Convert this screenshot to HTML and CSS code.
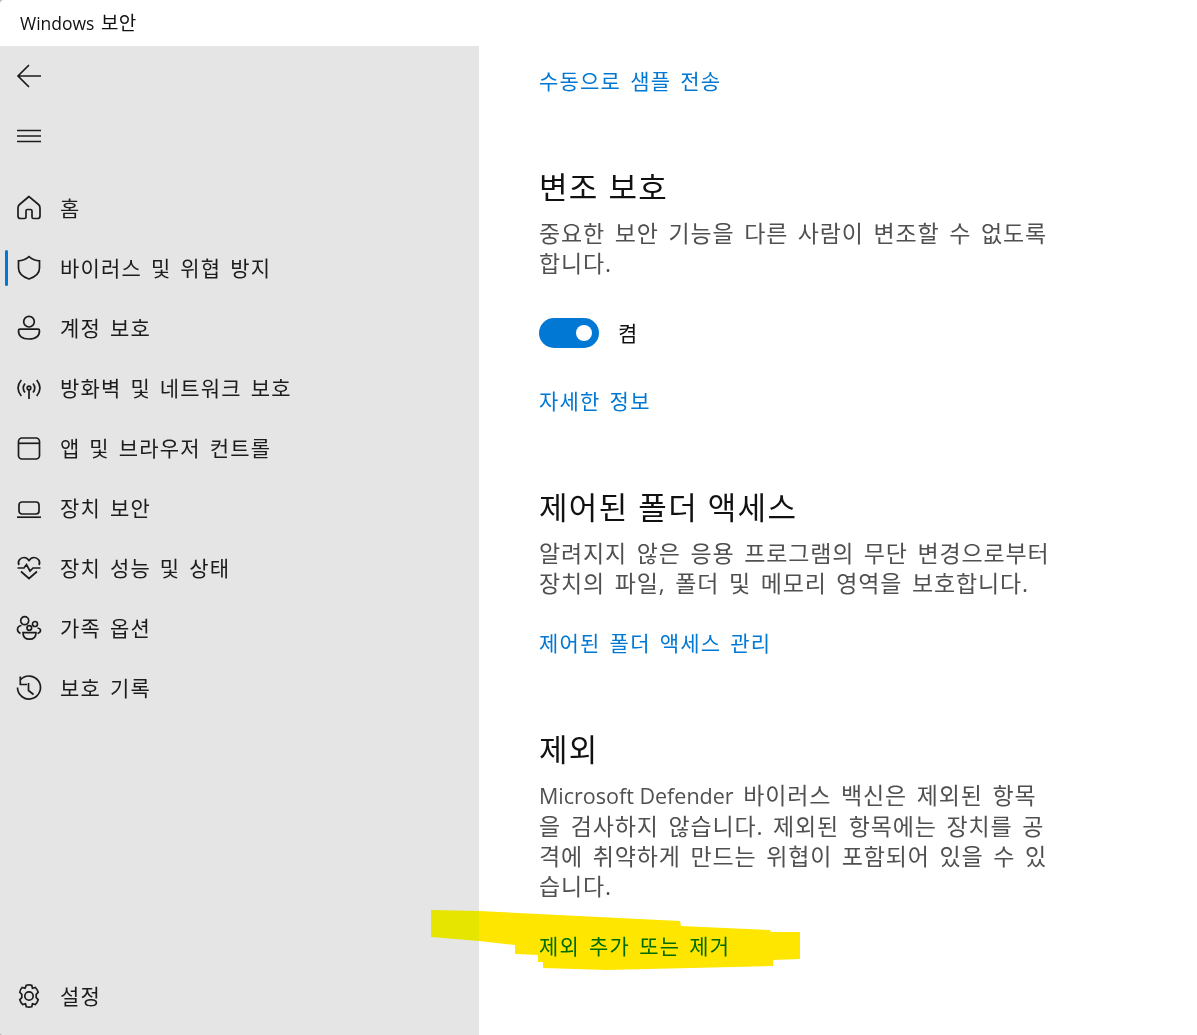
FILE: index.html
```html
<!DOCTYPE html>
<html lang="ko">
<head>
<meta charset="utf-8">
<title>Windows 보안</title>
<link rel="stylesheet" href="styles.css">
</head>
<body>
<div class="window">
  <header class="titlebar"><span class="title-latin">Windows</span> 보안</header>
  <div class="layout">
    <aside class="sidebar">
      <div class="tool">
        <svg class="icon" viewBox="0 0 24 24"><path d="M24 12H1M12 1 1 12l11 11"/></svg>
      </div>
      <div class="tool">
        <svg class="icon thin" viewBox="0 0 24 24"><path d="M0 6.500h24M0 12h24M0 17.500h24"/></svg>
      </div>
      <nav class="nav">
        <a class="item"><svg class="icon" viewBox="0 0 24 24"><path d="M12 .5 2.500 8.500Q1 9.800 1 12v8q0 2.500 2.500 2.500H7.500q1.500 0 1.500-1.500V15q0-1.500 1.500-1.500h3q1.500 0 1.500 1.500v6q0 1.500 1.500 1.500h4q2.500 0 2.500-2.500v-8q0-2.200-1.500-3.500z"/></svg><span>홈</span></a>
        <a class="item active"><svg class="icon" viewBox="0 0 24 24"><path d="M12 .7Q7 4.800 1.500 4.800V12q0 7.500 10.500 11Q22.500 19.500 22.500 12V4.800Q17 4.800 12 .7z"/></svg><span>바이러스 및 위협 방지</span></a>
        <a class="item"><svg class="icon" viewBox="0 0 24 24"><circle cx="12" cy="5.700" r="5.300"/><path d="M3 13.200h18q1.500 0 1.500 1.500 0 8.300-10.500 8.300T1.500 14.700q0-1.500 1.500-1.500z"/></svg><span>계정 보호</span></a>
        <a class="item"><svg class="icon" viewBox="0 0 24 24"><circle cx="12" cy="12" r="1.800"/><path d="M12 14v9M8 7.500q-3.500 4.500 0 9M16 7.500q3.500 4.500 0 9M4.300 4q-6.500 8 0 16M19.700 4q6.500 8 0 16"/></svg><span>방화벽 및 네트워크 보호</span></a>
        <a class="item"><svg class="icon" viewBox="0 0 24 24"><rect x="1.500" y="2" width="21" height="21" rx="3.500"/><path d="M1.500 7.300h21"/></svg><span>앱 및 브라우저 컨트롤</span></a>
        <a class="item"><svg class="icon" viewBox="0 0 24 24"><rect x="2" y="6" width="20" height="12" rx="3"/><path d="M0 21.200h24"/></svg><span>장치 보안</span></a>
        <a class="item"><svg class="icon" viewBox="0 0 24 24"><path d="M4 15.500 12 22.500 20 15.500M.5 12H7l2.500-3.500L13 15l3-3h7.500M2 9C0 5 3.500 1.500 7 1.500q3 0 5 3 2-3 5-3c3.500 0 7 3.500 5 7.500"/></svg><span>장치 성능 및 상태</span></a>
        <a class="item"><svg class="icon" viewBox="0 0 24 24"><circle cx="7.700" cy="4.700" r="4"/><circle cx="18" cy="8" r="2.500"/><circle cx="12.300" cy="12" r="2.300"/><path d="M6 16.700h13q0 6.500-6.500 6.500T6 16.700zM4.500 9.500Q.5 10 .5 13.500q0 2.500 3 4M20.500 12q3 .5 3 2.500t-3 3"/></svg><span>가족 옵션</span></a>
        <a class="item"><svg class="icon" viewBox="0 0 24 24"><path d="M3.300 4A11.500 11.500 0 1 1 .5 11.500M3.300.5V8.500H10M11.500 7v7.500l5 4"/></svg><span>보호 기록</span></a>
      </nav>
      <a class="item settings"><svg class="icon" viewBox="0 0 24 24"><circle cx="12" cy="12" r="4.200"/><path d="M9.300 1.300q2.700-.8 5.400 0l.8 3 2.900-.8q2 2 2.800 4.700L19.200 10.400v3.200l2 2.200q-.8 2.700-2.800 4.700l-2.900-.8-.8 3q-2.700.8-5.400 0l-.8-3-2.900.8q-2-2-2.800-4.700l2-2.200v-3.200l-2-2.200Q3 5.500 5.100 3.500l2.900.8z"/></svg><span>설정</span></a>
    </aside>
    <main class="content">
      <a class="link first">수동으로 샘플 전송</a>

      <h2 class="heading">변조 보호</h2>
      <p class="para">중요한 보안 기능을 다른 사람이 변조할 수 없도록<br>합니다.</p>
      <div class="switch-row">
        <span class="switch"><span class="knob"></span></span>
        <span class="switch-label">켬</span>
      </div>
      <a class="link after-switch">자세한 정보</a>

      <h2 class="heading">제어된 폴더 액세스</h2>
      <p class="para">알려지지 않은 응용 프로그램의 무단 변경으로부터<br>장치의 파일, 폴더 및 메모리 영역을 보호합니다.</p>
      <a class="link after-para">제어된 폴더 액세스 관리</a>

      <h2 class="heading">제외</h2>
      <p class="para"><span class="latin">Microsoft Defender</span> 바이러스 백신은 제외된 항목<br>을 검사하지 않습니다. 제외된 항목에는 장치를 공<br>격에 취약하게 만드는 위협이 포함되어 있을 수 있<br>습니다.</p>
      <a class="link after-para">제외 추가 또는 제거</a>
    </main>
  </div>
  <svg class="marker" viewBox="0 0 1197 1035" aria-hidden="true">
    <polygon class="marker-side" points="431,910 479,911 479,941 431,937"/>
    <polygon class="marker-main" points="479,911 680,921 681,926 770,930 771,932 800,932 800,959 773,960 773,966 607,970 543,968 543,962 538,962 538,955 515,954 515,945 479,941"/>
  </svg>
</div>
</body>
</html>
```
FILE: styles.css
```css
* { box-sizing: border-box; }
html, body { margin: 0; height: 100%; background: #b9b9b9; }
body { font-family: "Open Sans", "Noto Sans CJK KR", sans-serif; overflow: hidden; }
.window {
  position: relative;
  width: 1197px;
  height: 1035px;
  background: #fff;
  border-radius: 4px 0 0 4px;
  overflow: hidden;
  display: flex;
  flex-direction: column;
}
.titlebar {
  height: 46px;
  flex: none;
  padding-left: 20px;
  font-size: 19px;
  line-height: 46px;
  word-spacing: 1.500px;
  letter-spacing: .2px;
  color: #111;
}
.title-latin { font-size: 17.500px; letter-spacing: 0; }
.layout { flex: 1; display: flex; min-height: 0; }
.sidebar {
  width: 479px;
  flex: none;
  background: #e5e5e5;
  display: flex;
  flex-direction: column;
  padding-bottom: 9px;
}
.tool { height: 60px; padding-left: 17px; display: flex; align-items: center; flex: none; }
.nav { margin-top: 12px; display: flex; flex-direction: column; flex: 1; }
.item {
  position: relative;
  height: 60px;
  flex: none;
  padding-left: 17px;
  display: flex;
  align-items: center;
  gap: 19px;
  font-size: 21px;
  letter-spacing: 1.200px;
  word-spacing: 2.200px;
  color: #1c1c1c;
  white-space: nowrap;
}
.item span { position: relative; top: -1px; }
.item.active::before {
  content: "";
  position: absolute;
  left: 5px;
  top: 12px;
  width: 3px;
  height: 36px;
  border-radius: 2px;
  background: #0078d4;
}
.icon {
  width: 24px;
  height: 24px;
  flex: none;
  fill: none;
  stroke: #1c1c1c;
  stroke-width: 1.700;
  overflow: visible;
}
.icon.thin { stroke-width: 1.300; }
.content { flex: 1; padding-top: 20px; padding-left: 60px; min-width: 0; }
.link {
  display: block;
  font-size: 21px;
  line-height: 30px;
  letter-spacing: 1.200px;
  word-spacing: 2.400px;
  color: #0078d4;
}
.heading {
  margin: 71px 0 11px;
  font-size: 31px;
  font-weight: 400;
  line-height: 40px;
  letter-spacing: 1.300px;
  word-spacing: .5px;
  color: #111;
}
.para {
  margin: 0;
  font-size: 23px;
  line-height: 30px;
  letter-spacing: .840px;
  word-spacing: 2.900px;
  color: #505050;
  white-space: nowrap;
}
.latin { font-size: 21.500px; letter-spacing: 0; word-spacing: 0; }
.switch-row { margin-top: 40px; display: flex; align-items: center; gap: 19px; height: 30px; }
.switch {
  width: 60px;
  height: 30px;
  border-radius: 15px;
  background: #0078d4;
  display: flex;
  align-items: center;
  justify-content: flex-end;
  padding-right: 7px;
}
.knob { width: 16px; height: 16px; border-radius: 50%; background: #fff; }
.switch-label { font-size: 21px; color: #111; line-height: 30px; }
.after-switch { margin-top: 38px; }
.after-para { margin-top: 30px; }
.marker {
  position: absolute;
  left: 0;
  top: 0;
  width: 1197px;
  height: 1035px;
  pointer-events: none;
  mix-blend-mode: multiply;
}
.marker-side { fill: #ffff00; }
.marker-main { fill: #ffe600; }
```
